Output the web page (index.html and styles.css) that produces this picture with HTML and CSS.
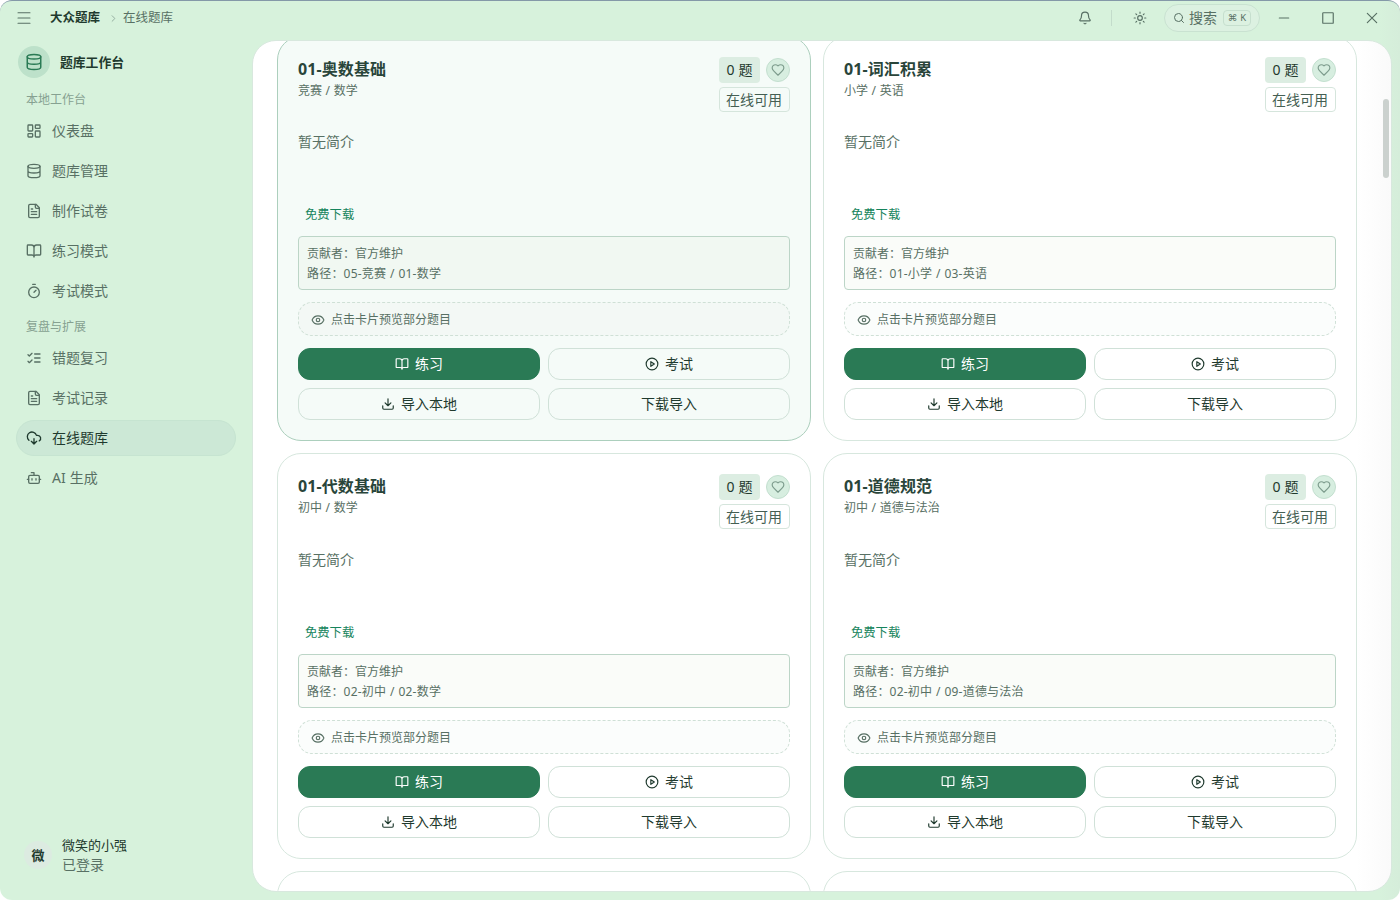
FILE: index.html
```html
<!DOCTYPE html>
<html lang="zh-CN">
  <head>
    <meta charset="UTF-8" />
    <meta name="viewport" content="width=device-width, initial-scale=1.0" />
    <title>大众题库</title>
    <link rel="stylesheet" href="styles.css">
  </head>
  <body>
    <svg class="sprite">
      <symbol id="menu" viewBox="0 0 24 24"><path d="M3 4h18M3 12h18M3 20h18" /></symbol>
      <symbol id="chevron" viewBox="0 0 24 24"><path d="m9 18 6-6-6-6" /></symbol>
      <symbol id="bell" viewBox="0 0 24 24"><path d="M10.3 21a2 2 0 0 0 3.4 0" /><path d="M3.3 15.3A1 1 0 0 0 4 17h16a1 1 0 0 0 .7-1.7C19.4 14 18 12.500 18 8A6 6 0 0 0 6 8c0 4.500-1.400 6-2.700 7.300" /></symbol>
      <symbol id="sun" viewBox="0 0 24 24"><circle cx="12" cy="12" r="4" /><path d="M12 2v2M12 20v2M4.900 4.900l1.400 1.400M17.700 17.700l1.400 1.400M2 12h2M20 12h2M6.300 17.700l-1.400 1.400M19.100 4.900l-1.400 1.400" /></symbol>
      <symbol id="search" viewBox="0 0 24 24"><circle cx="11" cy="11" r="8" /><path d="m21 21-4.300-4.300" /></symbol>
      <symbol id="minus" viewBox="0 0 24 24"><path d="M4 12h16" /></symbol>
      <symbol id="square" viewBox="0 0 24 24"><rect x="3" y="3" width="18" height="18" rx="1" /></symbol>
      <symbol id="close" viewBox="0 0 24 24"><path d="M4 4l16 16M20 4L4 20" /></symbol>
      <symbol id="database" viewBox="0 0 24 24"><ellipse cx="12" cy="5" rx="9" ry="3" /><path d="M3 5v14a9 3 0 0 0 18 0V5M3 12a9 3 0 0 0 18 0" /></symbol>
      <symbol id="dashboard" viewBox="0 0 24 24"><rect x="3" y="3" width="7" height="9" rx="1" /><rect x="14" y="3" width="7" height="5" rx="1" /><rect x="14" y="12" width="7" height="9" rx="1" /><rect x="3" y="16" width="7" height="5" rx="1" /></symbol>
      <symbol id="file" viewBox="0 0 24 24"><path d="M15 2H6a2 2 0 0 0-2 2v16a2 2 0 0 0 2 2h12a2 2 0 0 0 2-2V7Z" /><path d="M14 2v4a2 2 0 0 0 2 2h4M10 9H8M16 13H8M16 17H8" /></symbol>
      <symbol id="book" viewBox="0 0 24 24"><path d="M12 7v14M3 18a1 1 0 0 1-1-1V4a1 1 0 0 1 1-1h5a4 4 0 0 1 4 4 4 4 0 0 1 4-4h5a1 1 0 0 1 1 1v13a1 1 0 0 1-1 1h-6a3 3 0 0 0-3 3 3 3 0 0 0-3-3z" /></symbol>
      <symbol id="timer" viewBox="0 0 24 24"><path d="M10 2h4M12 14l3-3" /><circle cx="12" cy="14" r="8" /></symbol>
      <symbol id="checks" viewBox="0 0 24 24"><path d="m3 17 2 2 4-4M3 7l2 2 4-4M13 6h8M13 12h8M13 18h8" /></symbol>
      <symbol id="cloud" viewBox="0 0 24 24"><path d="M12 13v8l-4-4M12 21l4-4" /><path d="M4.400 15.300A7 7 0 1 1 15.700 8h1.800a4.500 4.500 0 0 1 2.400 8.300" /></symbol>
      <symbol id="bot" viewBox="0 0 24 24"><path d="M12 8V4H8" /><rect x="4" y="8" width="16" height="12" rx="2" /><path d="M2 14h2M20 14h2M15 13v2M9 13v2" /></symbol>
      <symbol id="heart" viewBox="0 0 24 24"><path d="M19 14c1.500-1.500 3-3.200 3-5.500A5.500 5.500 0 0 0 16.500 3c-1.800 0-3 .5-4.500 2-1.500-1.500-2.700-2-4.500-2A5.500 5.500 0 0 0 2 8.500c0 2.300 1.500 4 3 5.500l7 7Z" /></symbol>
      <symbol id="eye" viewBox="0 0 24 24"><path d="M2.100 12.300a1 1 0 0 1 0-.7 10.700 10.700 0 0 1 19.800 0 1 1 0 0 1 0 .7 10.700 10.700 0 0 1-19.800 0" /><circle cx="12" cy="12" r="3" /></symbol>
      <symbol id="play" viewBox="0 0 24 24"><circle cx="12" cy="12" r="10" /><path d="m10 8 6 4-6 4z" /></symbol>
      <symbol id="download" viewBox="0 0 24 24"><path d="M12 15V3M21 15v4a2 2 0 0 1-2 2H5a2 2 0 0 1-2-2v-4M7 10l5 5 5-5" /></symbol>
    </svg>

    <div class="window">
      <header class="titlebar">
        <svg class="icon menu"><use href="#menu" /></svg>
        <strong>大众题库</strong>
        <svg class="icon crumb-arrow"><use href="#chevron" /></svg>
        <span class="crumb">在线题库</span>
        <div class="tools">
          <svg class="icon bell"><use href="#bell" /></svg>
          <span class="divider"></span>
          <svg class="icon sun"><use href="#sun" /></svg>
          <div class="search">
            <svg class="icon"><use href="#search" /></svg>
            <span>搜索</span>
            <kbd>⌘ K</kbd>
          </div>
          <div class="controls">
            <svg class="icon"><use href="#minus" /></svg>
            <svg class="icon"><use href="#square" /></svg>
            <svg class="icon"><use href="#close" /></svg>
          </div>
        </div>
      </header>

      <aside class="sidebar">
        <div class="brand">
          <span class="brand-logo"><svg class="icon"><use href="#database" /></svg></span>
          <strong>题库工作台</strong>
        </div>
        <nav>
          <h6>本地工作台</h6>
          <a><svg class="icon"><use href="#dashboard" /></svg>仪表盘</a>
          <a><svg class="icon"><use href="#database" /></svg>题库管理</a>
          <a><svg class="icon"><use href="#file" /></svg>制作试卷</a>
          <a><svg class="icon"><use href="#book" /></svg>练习模式</a>
          <a><svg class="icon"><use href="#timer" /></svg>考试模式</a>
          <h6>复盘与扩展</h6>
          <a><svg class="icon"><use href="#checks" /></svg>错题复习</a>
          <a><svg class="icon"><use href="#file" /></svg>考试记录</a>
          <a class="active"><svg class="icon"><use href="#cloud" /></svg>在线题库</a>
          <a><svg class="icon"><use href="#bot" /></svg>AI 生成</a>
        </nav>
        <div class="user">
          <span class="avatar">微</span>
          <div>
            <p class="user-name">微笑的小强</p>
            <p class="user-state">已登录</p>
          </div>
        </div>
      </aside>

      <main class="panel">
        <div class="cards" id="cards"></div>
        <span class="scrollbar"></span>
      </main>
    </div>

    <script src="script.js"></script>
  </body>
</html>
```

FILE: styles.css
```css
* {
  margin: 0;
  box-sizing: border-box;
}
body {
  background-color: #fff;
  color: #1f3a2e;
  font-family: "Noto Sans", "Noto Sans CJK SC", sans-serif;
  font-size: 14px;
  line-height: 20px;
  word-spacing: 0.5px;
}
.sprite {
  display: none;
}
.icon {
  width: 16px;
  height: 16px;
  flex-shrink: 0;
  fill: none;
  stroke: currentColor;
  stroke-width: 2;
  stroke-linecap: round;
  stroke-linejoin: round;
}
.window {
  display: grid;
  grid-template-columns: 252px 1140px;
  grid-template-rows: 39px 852px;
  height: 900px;
  overflow: hidden;
  background: linear-gradient(90deg, #d7f2dc 0%, #d7f2dc 98.5%, #d5edda 100%);
  border-top: 1px solid #8499a8;
  border-radius: 12px;
}

/* titlebar */
.titlebar {
  grid-column: 1 / 3;
  display: flex;
  align-items: center;
  height: 34px;
  padding-left: 16px;
  color: #587064;
}
.titlebar strong {
  margin-left: 18px;
  font-size: 12.5px;
  color: #1f3a2e;
}
.titlebar .crumb {
  font-size: 12.5px;
}
.titlebar .menu {
  stroke-width: 1.6;
}
.crumb-arrow {
  width: 11px;
  height: 11px;
  margin: 0 4px 0 8px;
  color: #8fa99a;
}
.tools {
  display: flex;
  align-items: center;
  margin-left: auto;
}
.tools .bell,
.tools .sun {
  width: 14px;
  height: 14px;
}
.divider {
  width: 1px;
  height: 16px;
  margin: 0 21px 0 19px;
  background-color: #c3dccb;
}
.search {
  display: flex;
  align-items: center;
  width: 96px;
  height: 28px;
  margin-left: 17px;
  padding-left: 8px;
  background-color: #dcf1e1;
  border: 1px solid #c9e2d1;
  border-radius: 14px;
}
.search .icon {
  width: 12px;
  height: 12px;
  margin-right: 4px;
}
.search kbd {
  width: 28px;
  height: 16px;
  margin-left: 6px;
  border: 1px solid #c6dfce;
  border-radius: 4px;
  font-family: "Noto Sans", "DejaVu Sans", sans-serif;
  font-size: 9.5px;
  line-height: 14px;
  text-align: center;
}
.controls {
  display: flex;
  gap: 30px;
  margin: 0 13px 0 17px;
}
.controls .icon {
  width: 14px;
  height: 14px;
}

/* sidebar */
.sidebar {
  display: flex;
  flex-direction: column;
  padding: 6px 16px 16px;
}
.brand {
  display: flex;
  align-items: center;
  gap: 10px;
  height: 32px;
  margin-bottom: 8px;
  padding-left: 2px;
}
.brand-logo {
  display: flex;
  align-items: center;
  justify-content: center;
  width: 32px;
  height: 32px;
  border-radius: 50%;
  background-color: #bde1ca;
  color: #2a7a55;
}
.brand-logo .icon {
  width: 18px;
  height: 18px;
}
.brand strong {
  font-size: 12.8px;
}
nav {
  display: flex;
  flex-direction: column;
}
nav h6 {
  height: 27px;
  padding-left: 10px;
  font-size: 12px;
  font-weight: normal;
  line-height: 27px;
  color: #86a191;
}
nav a {
  display: flex;
  align-items: center;
  gap: 10px;
  height: 36px;
  margin-bottom: 4px;
  padding-left: 10px;
  border-radius: 18px;
  color: #587064;
}
nav a.active {
  background-color: #cce8d6;
  border: 1px solid #c6e4d1;
  padding-left: 9px;
  color: #1f3a2e;
}
.user {
  display: flex;
  align-items: center;
  gap: 10px;
  margin-top: auto;
  padding-left: 8px;
  padding-bottom: 1px;
}
.avatar {
  width: 28px;
  height: 28px;
  border-radius: 50%;
  background-color: #dcebe1;
  font-size: 13px;
  font-weight: bold;
  line-height: 28px;
  text-align: center;
}
.user-name {
  font-size: 13px;
}
.user-state {
  color: #587064;
}

/* content */
.panel {
  position: relative;
  overflow: hidden;
  padding: 0 34px 0 24px;
  background: linear-gradient(90deg, #fff 97%, #fafafa 100%);
  border: 1px solid #d8e8de;
  border-radius: 24px;
}
.scrollbar {
  position: absolute;
  top: 58px;
  right: 2px;
  width: 6px;
  height: 79px;
  border-radius: 3px;
  background-color: #cbd1ce;
}
.cards {
  display: grid;
  grid-template-columns: 1fr 1fr;
  grid-auto-rows: 405.6px;
  gap: 12px;
  margin-top: -5.2px;
}
.card {
  display: flex;
  flex-direction: column;
  padding: 20px;
  background-color: #fff;
  border: 1px solid #d7e7de;
  border-radius: 24px;
}
.card.hover {
  background-color: #f5fbf8;
  border-color: #accfbd;
}
.card-head {
  display: flex;
  justify-content: space-between;
}
.card h3 {
  font-size: 16px;
  line-height: 24px;
  letter-spacing: 0.1px;
  color: #29453a;
}
.category {
  font-size: 12px;
  line-height: 19px;
  color: #587064;
}
.badges {
  display: grid;
  grid-template-columns: auto 24px;
  align-items: center;
  gap: 4px 6px;
}
.count {
  height: 26px;
  padding: 0 6px;
  border-radius: 4px;
  background-color: #dcede2;
  line-height: 26px;
  text-align: center;
}
.like {
  display: flex;
  align-items: center;
  justify-content: center;
  height: 24px;
  border: 1px solid #c3dfcf;
  border-radius: 50%;
  background-color: #d7eee0;
  color: #7d9c8d;
}
.like .icon {
  width: 14px;
  height: 14px;
}
.status {
  grid-column: 1 / 3;
  height: 25px;
  padding: 0 7px 0 6px;
  border: 1px solid #d5e5dc;
  border-radius: 4px;
  line-height: 24px;
  color: #455f53;
}
.desc {
  margin-top: 20.4px;
  color: #587064;
}
.bottom {
  margin-top: auto;
}
.free {
  margin-bottom: 11px;
  padding-left: 7px;
  font-size: 12.3px;
  color: #16845c;
}
.info {
  height: 54px;
  margin-bottom: 12px;
  padding: 7px 8px 5px;
  border: 1px solid #bcd5c7;
  border-radius: 4px;
  background-color: #fafcf9;
  font-size: 12px;
  color: #587064;
}
.info .path {
  letter-spacing: 0.2px;
}
.hover .info {
  background-color: #f1f8f2;
}
.preview {
  display: flex;
  align-items: center;
  gap: 6px;
  height: 34px;
  margin-bottom: 12px;
  padding: 1px 0 0 12px;
  border: 1px dashed #cfe0d6;
  border-radius: 14px;
  background-color: #fbfdfc;
  font-size: 12px;
  color: #587064;
}
.hover .preview {
  background-color: #f3f8f5;
}
.preview .icon {
  width: 14px;
  height: 14px;
}
.actions {
  display: grid;
  grid-template-columns: 1fr 1fr;
  gap: 8px;
}
.actions button {
  display: flex;
  align-items: center;
  justify-content: center;
  gap: 6px;
  height: 32px;
  padding: 0;
  border: 1px solid #d0e1d8;
  border-radius: 12px;
  background-color: transparent;
  font: inherit;
  color: #1f3a2e;
}
.actions .primary {
  border-color: #2a7a55;
  background-color: #2a7a55;
  color: #fff;
}
.actions .icon {
  width: 14px;
  height: 14px;
}
```

FILE: script.js
```javascript
let banks = [
  { title: '01-奥数基础', category: '竞赛 / 数学', path: '05-竞赛 / 01-数学', hover: true },
  { title: '01-词汇积累', category: '小学 / 英语', path: '01-小学 / 03-英语' },
  { title: '01-代数基础', category: '初中 / 数学', path: '02-初中 / 02-数学' },
  { title: '01-道德规范', category: '初中 / 道德与法治', path: '02-初中 / 09-道德与法治' },
];

function icon(name) {
  return `<svg class="icon"><use href="#${name}" /></svg>`;
}

let cards = document.getElementById('cards');

banks.forEach((bank) => {
  let card = document.createElement('article');
  card.className = bank.hover ? 'card hover' : 'card';
  card.innerHTML = `
    <div class="card-head">
      <div>
        <h3>${bank.title}</h3>
        <p class="category">${bank.category}</p>
      </div>
      <div class="badges">
        <span class="count">0 题</span>
        <span class="like">${icon('heart')}</span>
        <span class="status">在线可用</span>
      </div>
    </div>
    <p class="desc">暂无简介</p>
    <div class="bottom">
      <p class="free">免费下载</p>
      <div class="info">
        <p>贡献者：官方维护</p>
        <p class="path">路径：${bank.path}</p>
      </div>
      <div class="preview">${icon('eye')}点击卡片预览部分题目</div>
      <div class="actions">
        <button class="primary">${icon('book')}练习</button>
        <button>${icon('play')}考试</button>
        <button>${icon('download')}导入本地</button>
        <button>下载导入</button>
      </div>
    </div>`;
  cards.appendChild(card);
});

// next row, only its top edge is scrolled into view
for (let i = 0; i < 2; i++) {
  let card = document.createElement('article');
  card.className = 'card';
  cards.appendChild(card);
}
```
